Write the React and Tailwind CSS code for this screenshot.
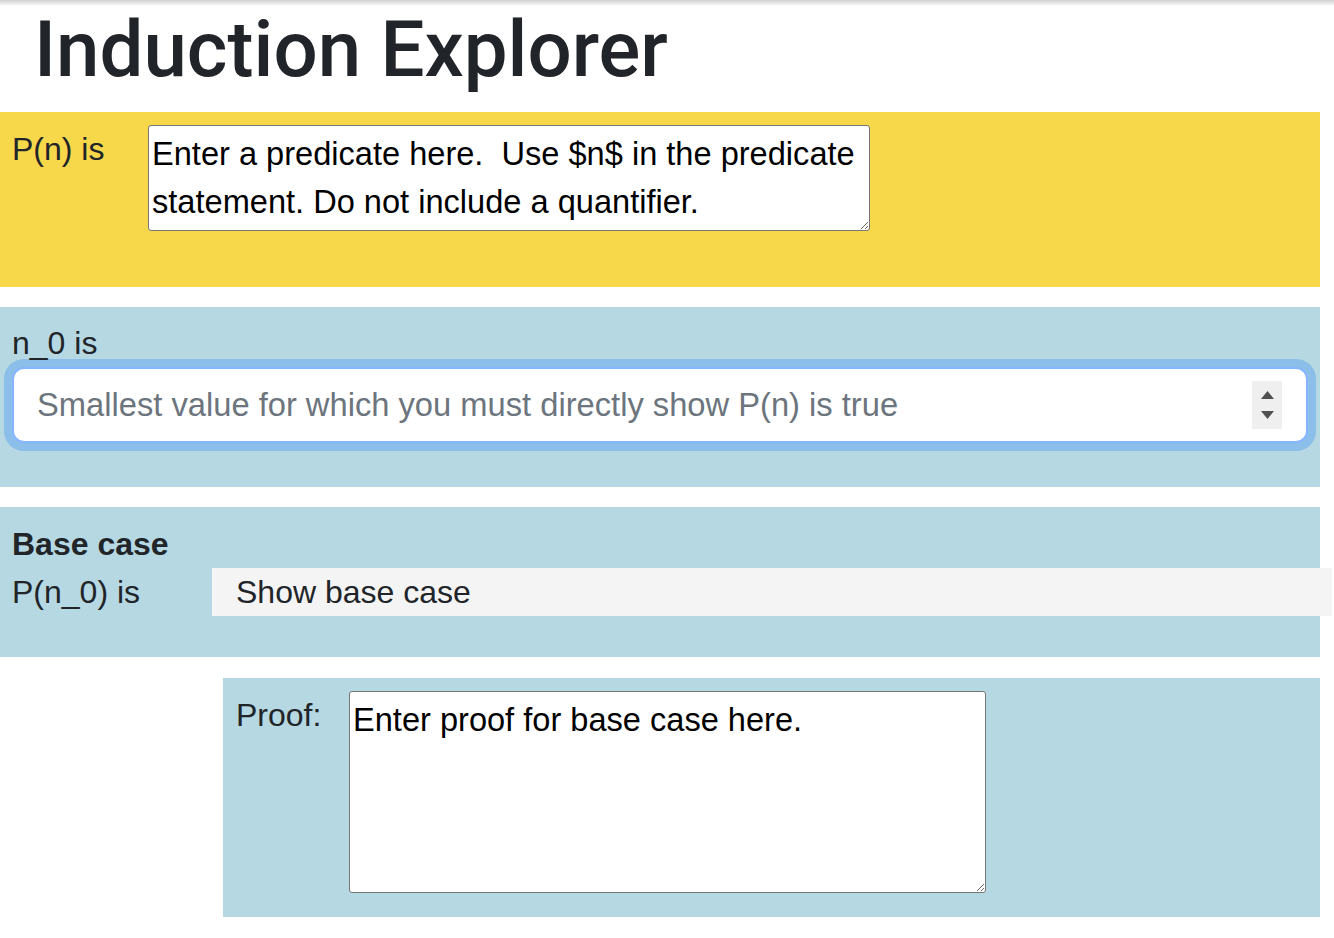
import React from 'react';

const Spinner = () => (
  <div className="w-[30px] h-[48px] bg-[#efefef] flex flex-col items-center justify-center gap-[12px] shrink-0">
    <svg width="13" height="8" viewBox="0 0 13 8">
      <path d="M6.5 0 L13 8 L0 8 Z" fill="#505050" />
    </svg>
    <svg width="13" height="8" viewBox="0 0 13 8">
      <path d="M0 0 L13 0 L6.5 8 Z" fill="#505050" />
    </svg>
  </div>
);

const App = () => {
  return (
    <div className="relative min-h-screen bg-white text-[#212529] font-['Liberation_Sans',Arial,sans-serif]">
      {/* top shadow */}
      <div className="pointer-events-none absolute top-0 inset-x-0 h-[6px] bg-gradient-to-b from-[#d0d0d0] to-white" />

      <h1 className="pl-[34px] pt-[2px] mb-[14px] text-[78px] leading-[96px] font-medium font-['Roboto',sans-serif]">
        Induction Explorer
      </h1>

      <div className="w-[1320px] text-[32px] leading-[48px]">
        {/* Predicate */}
        <section className="h-[175px] mb-[20px] bg-[#f8d84b] pt-[13px] px-[12px] flex items-start">
          <label className="w-[136px] shrink-0">P(n) is</label>
          <textarea
            rows={2}
            className="w-[722px] h-[106px] px-[3px] py-[4px] border border-[#767676] rounded-[3px] bg-white text-black text-[32.6px] leading-[48px] font-['Liberation_Sans',Arial,sans-serif]"
            defaultValue={"Enter a predicate here.  Use $n$ in the predicate statement. Do not include a quantifier."}
          />
        </section>

        {/* n_0 */}
        <section className="h-[180px] mb-[20px] bg-[#b6d8e3] pt-[12px] px-[12px]">
          <label className="block">n_0 is</label>
          <div className="w-[1296px] h-[76px] flex items-center pl-[23px] pr-[24px] bg-white border-2 border-[#86b7fe] rounded-[12px] shadow-[0_0_0_8px_rgba(13,110,253,0.25)]">
            <input
              type="text"
              className="flex-1 outline-none bg-transparent text-[32.7px] leading-[48px] placeholder:text-[#6c757d]"
              placeholder="Smallest value for which you must directly show P(n) is true"
            />
            <Spinner />
          </div>
        </section>

        {/* Base case */}
        <section className="h-[150px] mb-[21px] bg-[#b6d8e3] pt-[13px] pl-[12px]">
          <div className="font-bold">Base case</div>
          <div className="flex">
            <label className="w-[200px] shrink-0">P(n_0) is</label>
            <div className="w-[1120px] shrink-0 bg-[#f4f4f4] pl-[24px]">Show base case</div>
          </div>
        </section>

        {/* Proof */}
        <section className="ml-[223px] h-[239px] bg-[#b6d8e3] pt-[13px] pl-[13px] flex items-start">
          <label className="w-[113px] shrink-0">Proof:</label>
          <textarea
            rows={4}
            className="w-[637px] h-[202px] px-[3px] py-[4px] border border-[#767676] rounded-[3px] bg-white text-black text-[32.6px] leading-[48px] font-['Liberation_Sans',Arial,sans-serif]"
            defaultValue="Enter proof for base case here."
          />
        </section>
      </div>
    </div>
  );
};

export default App;
